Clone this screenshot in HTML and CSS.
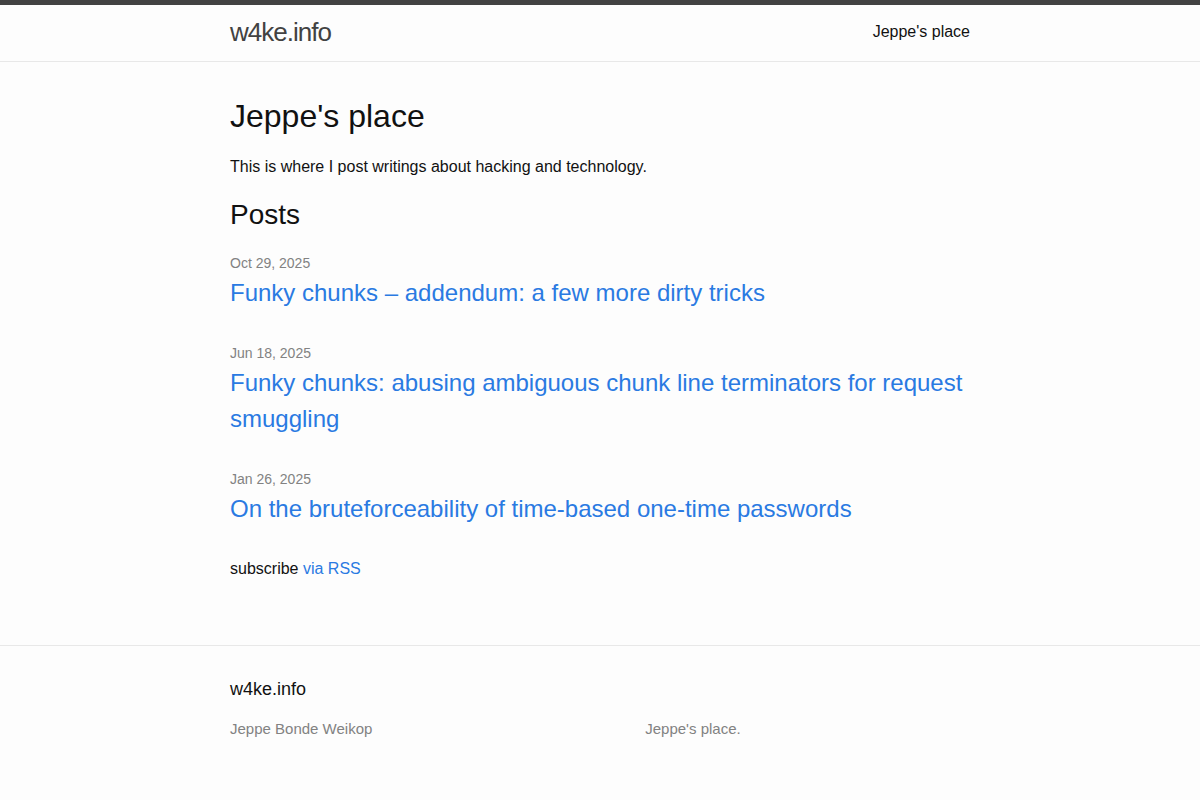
FILE: index.html
```html
<!DOCTYPE html>
<html lang="en">
<head>
<meta charset="utf-8">
<title>Jeppe's place | w4ke.info</title>
<link rel="stylesheet" href="styles.css">
</head>
<body>
<header class="site-header">
  <div class="wrapper header-row">
    <a class="site-title" href="#">w4ke.info</a>
    <nav class="site-nav">
      <a class="page-link" href="#">Jeppe's place</a>
    </nav>
  </div>
</header>
<main class="page-content">
  <div class="wrapper">
    <div class="home">
      <h1 class="page-heading">Jeppe's place</h1>
      <p class="intro">This is where I post writings about hacking and technology.</p>
      <h2 class="post-list-heading">Posts</h2>
      <ul class="post-list">
        <li>
          <span class="post-meta">Oct 29, 2025</span>
          <h3 class="post-title"><a class="post-link" href="#">Funky chunks – addendum: a few more dirty tricks</a></h3>
        </li>
        <li>
          <span class="post-meta">Jun 18, 2025</span>
          <h3 class="post-title"><a class="post-link" href="#">Funky chunks: abusing ambiguous chunk line terminators for request smuggling</a></h3>
        </li>
        <li>
          <span class="post-meta">Jan 26, 2025</span>
          <h3 class="post-title"><a class="post-link" href="#">On the bruteforceability of time-based one-time passwords</a></h3>
        </li>
      </ul>
      <p class="rss-subscribe">subscribe <a href="#">via RSS</a></p>
    </div>
  </div>
</main>
<footer class="site-footer">
  <div class="wrapper">
    <h2 class="footer-heading">w4ke.info</h2>
    <div class="footer-col-wrapper">
      <div class="footer-col footer-col-1">Jeppe Bonde Weikop</div>
      <div class="footer-col footer-col-2"></div>
      <div class="footer-col footer-col-3">Jeppe's place.</div>
    </div>
  </div>
</footer>
</body>
</html>
```

FILE: styles.css
```css
* { box-sizing: border-box; }
html, body { margin: 0; padding: 0; }
body {
  font-family: "Liberation Sans", Arial, sans-serif;
  font-size: 16px;
  line-height: 1.5;
  color: #111111;
  background: #fdfdfd;
  min-height: 800px;
}
a { color: #2a7ae2; text-decoration: none; }
h1, h2, h3, p, ul { margin: 0; font-weight: 400; }

.wrapper {
  max-width: 800px;
  margin: 0 auto;
  padding: 0 30px;
}

.site-header {
  border-top: 5px solid #424242;
  border-bottom: 1px solid #e8e8e8;
}
.header-row {
  display: flex;
  justify-content: space-between;
  align-items: flex-start;
  height: 56px;
}
.site-title {
  font-size: 26px;
  font-weight: 300;
  letter-spacing: -1px;
  line-height: 54px;
  color: #424242;
}
.site-nav { line-height: 53px; }
.page-link {
  color: #111111;
}

.page-content { padding: 30px 0 49px; }
.page-heading {
  font-size: 32px;
  line-height: 48px;
  margin-bottom: 15px;
}
.intro { margin-bottom: 15px; }
.post-list-heading {
  font-size: 28px;
  line-height: 42px;
  margin-bottom: 15px;
}
.post-list {
  list-style: none;
  padding: 0;
}
.post-list li { margin-bottom: 30px; }
.post-meta {
  display: block;
  font-size: 14px;
  line-height: 24px;
  color: #828282;
}
.post-title { font-size: 24px; line-height: 36px; }
.post-link { display: block; }
.rss-subscribe { margin-bottom: 15px; }

.site-footer {
  border-top: 1px solid #e8e8e8;
  padding: 30px 0;
}
.footer-heading {
  font-size: 18px;
  line-height: 27px;
  margin-bottom: 15px;
}
.footer-col-wrapper {
  display: flex;
  font-size: 15px;
  line-height: 22.5px;
  color: #828282;
  margin-left: -15px;
}
.footer-col { padding-left: 15px; }
.footer-col-1 { width: 35%; }
.footer-col-2 { width: 20%; }
.footer-col-3 { width: 45%; }
```
